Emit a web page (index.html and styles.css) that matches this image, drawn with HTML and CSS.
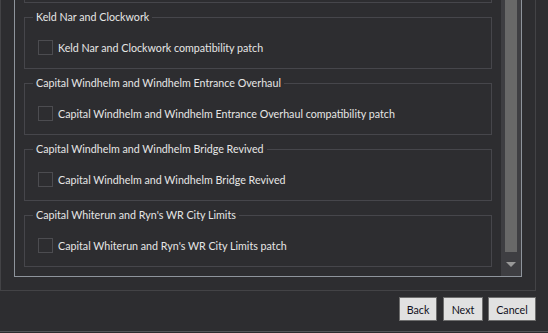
FILE: index.html
```html
<!DOCTYPE html>
<html>
<head>
<meta charset="utf-8">
<link rel="stylesheet" href="styles.css">
</head>
<body>
<div class="frame">
  <div class="scroll">
    <div class="list">
      <div class="group"></div>
      <div class="group">
        <div class="title">Keld Nar and Clockwork</div>
        <label class="row"><span class="box"></span><span class="label">Keld Nar and Clockwork compatibility patch</span></label>
      </div>
      <div class="group">
        <div class="title">Capital Windhelm and Windhelm Entrance Overhaul</div>
        <label class="row"><span class="box"></span><span class="label">Capital Windhelm and Windhelm Entrance Overhaul compatibility patch</span></label>
      </div>
      <div class="group">
        <div class="title">Capital Windhelm and Windhelm Bridge Revived</div>
        <label class="row"><span class="box"></span><span class="label">Capital Windhelm and Windhelm Bridge Revived</span></label>
      </div>
      <div class="group">
        <div class="title">Capital Whiterun and Ryn's WR City Limits</div>
        <label class="row"><span class="box"></span><span class="label">Capital Whiterun and Ryn's WR City Limits patch</span></label>
      </div>
    </div>
    <div class="scrollbar">
      <div class="track"><div class="thumb"></div></div>
      <div class="arrow"><span class="tri"></span></div>
    </div>
  </div>
</div>
<div class="buttons">
  <button class="btn btn-back">Back</button>
  <button class="btn btn-next">Next</button>
  <button class="btn btn-cancel">Cancel</button>
</div>
</body>
</html>
```
FILE: styles.css
```css
html, body {
  margin: 0;
  padding: 0;
}
body {
  width: 548px;
  height: 333px;
  overflow: hidden;
  background: #2d2d30;
  font-family: "Lato", "Noto Sans", sans-serif;
  font-size: 10.7px;
  color: #e6e6e6;
}
.frame {
  margin: -72px 12px 0 0;
  border: 1px solid #434346;
  padding: 12px 13px 13px 13px;
}
.scroll {
  display: flex;
  border: 1px solid #8e949c;
}
.list {
  flex: 1;
  padding: 9px 9px;
  display: flex;
  flex-direction: column;
  gap: 14px;
}
.group {
  box-sizing: border-box;
  height: 52px;
  border: 1px solid #46464b;
  display: flex;
  flex-direction: column;
  align-items: flex-start;
}
.title {
  margin: -9px 0 0 8px;
  padding: 0 3px;
  line-height: 16px;
  height: 16px;
  background: #2d2d30;
  white-space: nowrap;
}
.row {
  display: flex;
  align-items: center;
  margin: 15px 0 0 13px;
  height: 15px;
  line-height: 16px;
  white-space: nowrap;
}
.box {
  box-sizing: border-box;
  width: 15px;
  height: 15px;
  border: 1px solid #4c4c50;
  margin-right: 5px;
  flex: none;
}
.scrollbar {
  width: 20px;
  background: #3e3e42;
  display: flex;
  flex-direction: column;
}
.track {
  flex: 1;
  display: flex;
  flex-direction: column;
  padding: 0 4px;
}
.thumb {
  flex: 1;
  background: #686868;
}
.arrow {
  height: 24px;
  box-sizing: border-box;
  padding-top: 10px;
  display: flex;
  justify-content: center;
}
.tri {
  width: 0;
  height: 0;
  border-left: 5px solid transparent;
  border-right: 5px solid transparent;
  border-top: 5px solid #999999;
}
.buttons {
  display: flex;
  justify-content: flex-end;
  gap: 6px;
  margin-top: 6px;
  padding: 0 12px 10px 0;
  border-bottom: 1px solid #55555a;
}
.btn {
  box-sizing: border-box;
  height: 24px;
  padding: 0;
  margin: 0;
  background: #e1e1e1;
  border: 1px solid #6e6e6e;
  border-radius: 0;
  font-family: "Lato", "Noto Sans", sans-serif;
  font-size: 10.7px;
  color: #101020;
}
.btn-back { width: 38px; }
.btn-next { width: 40px; margin-right: -1px; }
.btn-cancel { width: 48px; }
```
